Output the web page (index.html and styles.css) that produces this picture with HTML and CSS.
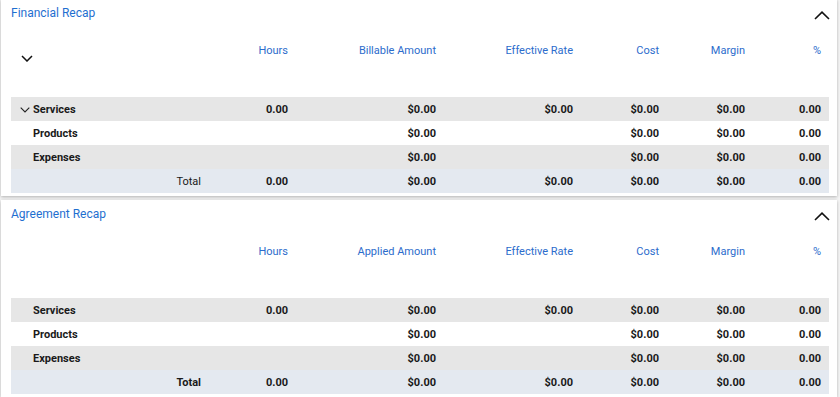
FILE: index.html
```html
<!DOCTYPE html>
<html>
<head>
<meta charset="utf-8">
<link rel="stylesheet" href="styles.css">
</head>
<body>
<div class="page">
  <section class="card first">
    <div class="card-head">
      <span class="title">Financial Recap</span>
      <svg class="up" width="16" height="9" viewBox="0 0 16 9"><path d="M1 8 L8 1.2 L15 8" fill="none" stroke="#111" stroke-width="1.6"/></svg>
    </div>
    <table class="recap">
      <colgroup><col class="c-label"><col class="c-hours"><col class="c-amt"><col class="c-rate"><col class="c-cost"><col class="c-margin"><col class="c-pct"></colgroup>
      <thead>
        <tr>
          <th class="lbl"><svg class="down" width="12" height="7" viewBox="0 0 12 7"><path d="M1 1 L6 6 L11 1" fill="none" stroke="#111" stroke-width="1.5"/></svg></th>
          <th>Hours</th><th>Billable Amount</th><th>Effective Rate</th><th>Cost</th><th>Margin</th><th>%</th>
        </tr>
      </thead>
      <tbody>
        <tr class="odd"><td class="lbl"><svg class="sub" width="10" height="6" viewBox="0 0 10 6"><path d="M0.7 0.7 L5 5 L9.3 0.7" fill="none" stroke="#222" stroke-width="1.1"/></svg>Services</td><td>0.00</td><td>$0.00</td><td>$0.00</td><td>$0.00</td><td>$0.00</td><td>0.00</td></tr>
        <tr><td class="lbl">Products</td><td></td><td>$0.00</td><td></td><td>$0.00</td><td>$0.00</td><td>0.00</td></tr>
        <tr class="odd"><td class="lbl">Expenses</td><td></td><td>$0.00</td><td></td><td>$0.00</td><td>$0.00</td><td>0.00</td></tr>
        <tr class="total"><td class="tot-label light">Total</td><td>0.00</td><td>$0.00</td><td>$0.00</td><td>$0.00</td><td>$0.00</td><td>0.00</td></tr>
      </tbody>
    </table>
  </section>
  <section class="card">
    <div class="card-head">
      <span class="title">Agreement Recap</span>
      <svg class="up" width="16" height="9" viewBox="0 0 16 9"><path d="M1 8 L8 1.2 L15 8" fill="none" stroke="#111" stroke-width="1.6"/></svg>
    </div>
    <table class="recap">
      <colgroup><col class="c-label"><col class="c-hours"><col class="c-amt"><col class="c-rate"><col class="c-cost"><col class="c-margin"><col class="c-pct"></colgroup>
      <thead>
        <tr>
          <th class="lbl"></th>
          <th>Hours</th><th>Applied Amount</th><th>Effective Rate</th><th>Cost</th><th>Margin</th><th>%</th>
        </tr>
      </thead>
      <tbody>
        <tr class="odd"><td class="lbl">Services</td><td>0.00</td><td>$0.00</td><td>$0.00</td><td>$0.00</td><td>$0.00</td><td>0.00</td></tr>
        <tr><td class="lbl">Products</td><td></td><td>$0.00</td><td></td><td>$0.00</td><td>$0.00</td><td>0.00</td></tr>
        <tr class="odd"><td class="lbl">Expenses</td><td></td><td>$0.00</td><td></td><td>$0.00</td><td>$0.00</td><td>0.00</td></tr>
        <tr class="total"><td class="tot-label">Total</td><td>0.00</td><td>$0.00</td><td>$0.00</td><td>$0.00</td><td>$0.00</td><td>0.00</td></tr>
      </tbody>
    </table>
  </section>
</div>
</body>
</html>
```

FILE: styles.css
```css
html, body {
  margin: 0;
  padding: 0;
  background: #f4f4f4;
  font-family: Roboto, "Liberation Sans", Arial, sans-serif;
  overflow: hidden;
}
.page {
  display: flex;
  flex-direction: column;
  gap: 4px;
  margin-top: -1px;
  padding: 0 3px 0 1px;
}
.card {
  background: #fff;
  box-shadow: 0 1px 3px rgba(0, 0, 0, 0.28);
  padding: 0 8px 3px 10px;
}
.card-head {
  height: 27px;
  display: flex;
  align-items: flex-start;
  justify-content: space-between;
}
.title {
  font-size: 12px;
  line-height: 14px;
  color: #1f6fd0;
  padding-top: 7px;
}
.up {
  margin-top: 12px;
  margin-right: -1px;
}
.recap {
  width: 818px;
  table-layout: fixed;
  border-collapse: collapse;
  border-spacing: 0;
}
.c-label { width: 198px; }
.c-hours { width: 87px; }
.c-amt { width: 148px; }
.c-rate { width: 137px; }
.c-cost { width: 86px; }
.c-margin { width: 86px; }
.c-pct { width: 76px; }
.recap thead tr {
  height: 71px;
}
.recap th {
  padding: 18px 8px 0 0;
  vertical-align: top;
  text-align: right;
  font-size: 11px;
  line-height: 13px;
  font-weight: 400;
  color: #2c6ccc;
}
.recap th.lbl {
  text-align: left;
  padding: 0;
  position: relative;
}
.down {
  position: absolute;
  left: 10px;
  top: 29px;
}
.recap tbody tr {
  height: 24px;
}
.recap td {
  padding: 0 8px 0 0;
  text-align: right;
  font-size: 11px;
  line-height: 13px;
  font-weight: 700;
  color: #1a1a1a;
  vertical-align: middle;
}
.recap td.lbl {
  text-align: left;
  padding-left: 22px;
  position: relative;
}
.sub {
  position: absolute;
  left: 9px;
  top: 10px;
}
.recap tr.odd td { background: #e6e6e6; }
.recap tr.total td { background: #e4e9f0; }
.recap td.tot-label { padding-right: 8px; }
.recap td.light { font-weight: 400; }
```
